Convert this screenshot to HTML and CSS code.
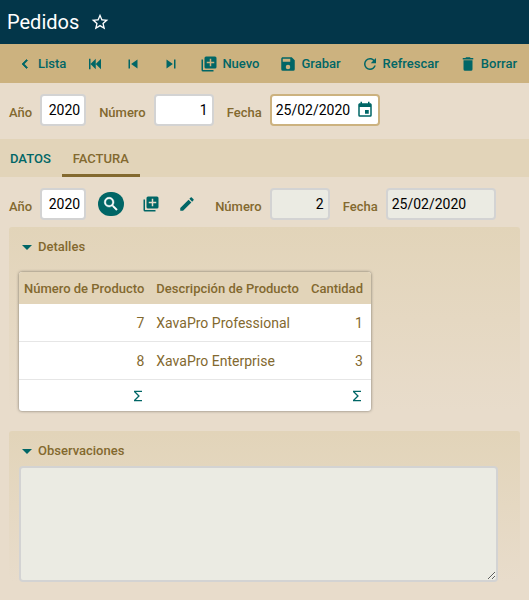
FILE: index.html
```
<!DOCTYPE html>
<html lang="es">
<head>
<meta charset="utf-8">
<title>Pedidos</title>
<link rel="stylesheet" href="styles.css">
</head>
<body>
<header class="module-header">
  <h1>Pedidos</h1>
  <button class="star" type="button" aria-label="Favorito"><svg class="icon" viewBox="0 0 24 24"><path d="M12,15.39L8.24,17.66L9.23,13.38L5.91,10.5L10.29,10.13L12,6.09L13.71,10.13L18.09,10.5L14.77,13.38L15.76,17.66M22,9.24L14.81,8.63L12,2L9.19,8.63L2,9.24L7.45,13.97L5.82,21L12,17.27L18.18,21L16.54,13.97L22,9.24Z"/></svg></button>
</header>
<nav class="toolbar">
  <button class="tool" type="button"><svg class="icon" viewBox="0 0 24 24"><path d="M15.41,16.58L10.83,12L15.41,7.41L14,6L8,12L14,18L15.41,16.58Z" stroke="currentColor"/></svg>Lista</button>
  <button class="tool" type="button" aria-label="Primero"><svg class="icon" viewBox="0 0 24 24"><path d="M20,5V19L13,12M6,5V19H4V5M13,5V19L6,12"/></svg></button>
  <button class="tool" type="button" aria-label="Anterior"><svg class="icon" viewBox="0 0 24 24"><path d="M6,18V6H8V18H6M9.5,12L18,6V18L9.5,12Z"/></svg></button>
  <button class="tool" type="button" aria-label="Siguiente"><svg class="icon" viewBox="0 0 24 24"><path d="M16,18H18V6H16M6,18L14.5,12L6,6V18Z"/></svg></button>
  <button class="tool" type="button"><svg class="icon" viewBox="0 0 24 24"><path d="M19,11H15V15H13V11H9V9H13V5H15V9H19M20,2H8A2,2 0 0,0 6,4V16A2,2 0 0,0 8,18H20A2,2 0 0,0 22,16V4A2,2 0 0,0 20,2M4,6H2V20A2,2 0 0,0 4,22H18V20H4V6Z"/></svg>Nuevo</button>
  <button class="tool" type="button"><svg class="icon" viewBox="0 0 24 24"><path d="M15,9H5V5H15M12,19A3,3 0 0,1 9,16A3,3 0 0,1 12,13A3,3 0 0,1 15,16A3,3 0 0,1 12,19M17,3H5C3.89,3 3,3.9 3,5V19A2,2 0 0,0 5,21H19A2,2 0 0,0 21,19V7L17,3Z"/></svg>Grabar</button>
  <button class="tool" type="button"><svg class="icon" viewBox="0 0 24 24"><path d="M17.65,6.35C16.2,4.9 14.21,4 12,4A8,8 0 0,0 4,12A8,8 0 0,0 12,20C15.73,20 18.84,17.45 19.73,14H17.65C16.83,16.33 14.61,18 12,18A6,6 0 0,1 6,12A6,6 0 0,1 12,6C13.66,6 15.14,6.69 16.22,7.78L13,11H20V4L17.65,6.35Z"/></svg>Refrescar</button>
  <button class="tool" type="button"><svg class="icon" viewBox="0 0 24 24"><path d="M19,4H15.5L14.5,3H9.5L8.5,4H5V6H19M6,19A2,2 0 0,0 8,21H16A2,2 0 0,0 18,19V7H6V19Z"/></svg>Borrar</button>
</nav>
<main>
  <div class="row">
    <div class="field"><label for="year">Año</label><input class="box year" id="year" value="2020"></div>
    <div class="field"><label for="number">Número</label><input class="box number" id="number" value="1"></div>
    <div class="field"><label for="date">Fecha</label>
      <div class="box date-box"><input id="date" value="25/02/2020"><button type="button" aria-label="Calendario"><svg class="icon" viewBox="0 0 24 24"><path d="M19,19H5V8H19M16,1V3H8V1H6V3H5C3.89,3 3,3.89 3,5V19A2,2 0 0,0 5,21H19A2,2 0 0,0 21,19V5C21,3.89 20.1,3 19,3H18V1M17,12H12V17H17V12Z"/></svg></button></div>
    </div>
  </div>
  <div class="tabs" role="tablist">
    <button class="tab" type="button" role="tab">DATOS</button>
    <button class="tab active" type="button" role="tab" aria-selected="true">FACTURA</button>
  </div>
  <div class="row invoice">
    <div class="field"><label for="inv-year">Año</label><input class="box year" id="inv-year" value="2020">
      <button class="search" type="button" aria-label="Buscar"><svg class="icon" viewBox="0 0 24 24"><path d="M9.5,3A6.5,6.5 0 0,1 16,9.5C16,11.11 15.41,12.59 14.44,13.73L14.71,14H15.5L20.5,19L19,20.5L14,15.5V14.71L13.73,14.44C12.59,15.41 11.11,16 9.5,16A6.5,6.5 0 0,1 3,9.5A6.5,6.5 0 0,1 9.5,3M9.5,5C7,5 5,7 5,9.5C5,12 7,14 9.5,14C12,14 14,12 14,9.5C14,7 12,5 9.5,5Z" stroke="currentColor" stroke-width="0.6"/></svg></button>
      <button class="action" type="button" aria-label="Crear"><svg class="icon" viewBox="0 0 24 24"><path d="M19,11H15V15H13V11H9V9H13V5H15V9H19M20,2H8A2,2 0 0,0 6,4V16A2,2 0 0,0 8,18H20A2,2 0 0,0 22,16V4A2,2 0 0,0 20,2M4,6H2V20A2,2 0 0,0 4,22H18V20H4V6Z"/></svg></button>
      <button class="action" type="button" aria-label="Modificar"><svg class="icon" viewBox="0 0 24 24"><path d="M20.71,7.04C21.1,6.65 21.1,6 20.71,5.63L18.37,3.29C18,2.9 17.35,2.9 16.96,3.29L15.12,5.12L18.87,8.87M3,17.25V21H6.75L17.81,9.93L14.06,6.18L3,17.25Z"/></svg></button>
    </div>
    <div class="field"><label for="inv-number">Número</label><input class="box number" id="inv-number" value="2" readonly></div>
    <div class="field"><label for="inv-date">Fecha</label><input class="box date" id="inv-date" value="25/02/2020" readonly></div>
  </div>
  <section class="frame">
    <h2><svg class="arrow" viewBox="0 0 10 5"><path d="M0,0H10L5,5Z"/></svg>Detalles</h2>
    <table>
      <thead><tr><th>Número de Producto</th><th>Descripción de Producto</th><th>Cantidad</th></tr></thead>
      <tbody>
        <tr><td class="num">7</td><td>XavaPro Professional</td><td class="num">1</td></tr>
        <tr><td class="num">8</td><td>XavaPro Enterprise</td><td class="num">3</td></tr>
      </tbody>
      <tfoot><tr><td class="num"><button type="button" aria-label="Sumar"><svg class="icon" viewBox="0 0 24 24"><path d="M18,6H8.83L14.83,12L8.83,18H18V20H6V18L12,12L6,6V4H18V6Z"/></svg></button></td><td></td><td class="num"><button type="button" aria-label="Sumar"><svg class="icon" viewBox="0 0 24 24"><path d="M18,6H8.83L14.83,12L8.83,18H18V20H6V18L12,12L6,6V4H18V6Z"/></svg></button></td></tr></tfoot>
    </table>
  </section>
  <section class="frame">
    <h2><svg class="arrow" viewBox="0 0 10 5"><path d="M0,0H10L5,5Z"/></svg><label for="remarks">Observaciones</label></h2>
    <textarea class="box" id="remarks" readonly></textarea>
  </section>
</main>
</body>
</html>
```
FILE: styles.css
```
:root {
  --teal: #006666;
  --brown: #83692f;
  --sand: #e8dccb;
  --sand-dark: #e2d4b9;
  --gold: #ccb27f;
}
* { box-sizing: border-box; }
body {
  margin: 0;
  background: var(--sand);
  color: var(--brown);
  font: 14px/20px Roboto, sans-serif;
}
button {
  padding: 0;
  border: 0;
  background: none;
  color: var(--teal);
  font: inherit;
}
.icon { display: block; width: 18px; height: 18px; fill: currentColor; }

.module-header {
  display: flex;
  align-items: center;
  gap: 11px;
  height: 44px;
  padding: 0 7px;
  background: #033649;
  color: #fff;
}
.module-header h1 { margin: 0; font-size: 20px; line-height: 40px; font-weight: 400; }
.star { color: #fff; }
.star .icon { width: 20px; height: 20px; }

.toolbar {
  display: flex;
  height: 39px;
  padding: 0 6px;
  background: var(--gold);
}
.tool {
  display: flex;
  align-items: center;
  gap: 4px;
  padding: 0 10px;
  font-size: 13px;
  font-weight: 500;
  white-space: nowrap;
}

.row { display: flex; gap: 13px; padding: 11px 9px 13px; }
.invoice { padding-bottom: 7px; }
.field { display: flex; align-items: center; }
.field label { margin-right: 8px; padding-top: 5px; font-size: 13px; font-weight: 500; }
.box {
  height: 32px;
  padding: 0 4px;
  border: 2px solid #d3d3d3;
  border-radius: 4px;
  background: #fff;
  color: #000;
  font: 14px/20px Roboto, sans-serif;
}
.box:read-only:not(div) { background: #ebebe3; }
.year { width: 46px; text-align: right; }
.number { width: 60px; text-align: right; }
.date { width: 110px; }
.date-box { display: flex; align-items: center; width: 110px; border-color: var(--gold); }
.date-box input {
  flex: 1;
  min-width: 0;
  padding: 0;
  border: 0;
  background: none;
  color: #000;
  font: inherit;
}
.search {
  display: grid;
  place-items: center;
  width: 26px;
  height: 24px;
  margin-left: 12px;
  border-radius: 12px;
  background: var(--teal);
  color: #fff;
}
.action { display: grid; place-items: center; width: 18px; margin-left: 18px; }
.action:last-child { margin-right: 6px; }

.tabs { display: flex; height: 38px; background: var(--sand-dark); }
.tab { padding: 2px 11px 0; font-size: 13px; font-weight: 500; }
.tab:first-child { padding-left: 10px; }
.tab.active { box-shadow: inset 0 -3px var(--brown); color: var(--brown); }

.frame {
  margin: 0 9px 20px;
  padding: 10px 22px 0 10px;
  border-radius: 3px;
  background: linear-gradient(var(--sand-dark), var(--sand));
}
.frame h2 {
  display: flex;
  align-items: center;
  gap: 6px;
  margin: 0 0 15px;
  padding-left: 3px;
  font-size: 13px;
  line-height: 20px;
  font-weight: 500;
}
.frame h2:has(label) { margin-bottom: 5px; }
.arrow { width: 10px; height: 5px; fill: var(--teal); }

table {
  border-spacing: 0;
  border-radius: 3px;
  overflow: hidden;
  box-shadow: 0 0 3px rgba(0, 0, 0, .5);
  background: #fff;
}
th, td { padding: 0 6px; text-align: left; }
th { padding-top: 2px; }
th:first-child { padding-left: 5px; }
th:last-child, td:last-child { padding-right: 8px; }
th { height: 32px; background: var(--sand-dark); font-size: 13px; font-weight: 500; white-space: nowrap; }
tbody td { height: 38px; border-bottom: 1px solid #e6e6e6; }
tfoot td { height: 31px; padding-right: 4px; padding-bottom: 2px; }
tfoot td:last-child { padding-right: 6px; }
.num { text-align: right; }
td button { display: inline-block; vertical-align: middle; }
td .icon { width: 16px; height: 16px; }

textarea.box { display: block; width: 100%; height: 116px; }
```
